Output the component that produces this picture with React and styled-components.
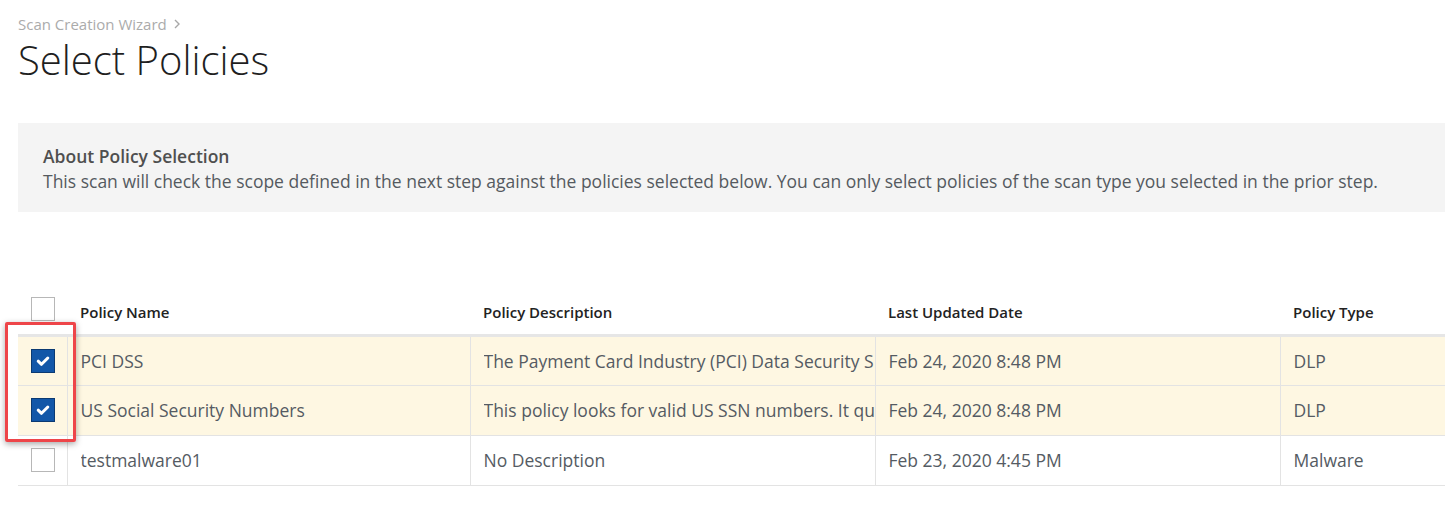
import React from 'react'
import styled, { createGlobalStyle } from 'styled-components'

const GlobalStyle = createGlobalStyle`
    html, body {
        margin: 0;
        padding: 0;
        background: #ffffff;
        font-family: "Open Sans", "Liberation Sans", Arial, sans-serif;
        overflow: hidden;
    }
`

const policies = [
    { id: 1, name: 'PCI DSS', desc: 'The Payment Card Industry (PCI) Data Security S', date: 'Feb 24, 2020 8:48 PM', type: 'DLP', selected: true },
    { id: 2, name: 'US Social Security Numbers', desc: 'This policy looks for valid US SSN numbers. It qu', date: 'Feb 24, 2020 8:48 PM', type: 'DLP', selected: true },
    { id: 3, name: 'testmalware01', desc: 'No Description', date: 'Feb 23, 2020 4:45 PM', type: 'Malware', selected: false },
]

const Check = () => (
    <svg width="16" height="16" viewBox="0 0 16 16">
        <path d="M3.2 8.2 L6.5 11.3 L12.8 5" fill="none" stroke="#fff" strokeWidth="3" strokeLinecap="round" strokeLinejoin="round" />
    </svg>
)

export default function App() {
    return (
        <Page>
            <GlobalStyle />
            <Breadcrumb>
                Scan Creation Wizard
                <Chevron viewBox="0 0 8 12"><path d="M2 2 L6 6 L2 10" /></Chevron>
            </Breadcrumb>
            <Title>Select Policies</Title>

            <InfoBox>
                <InfoTitle>About Policy Selection</InfoTitle>
                <InfoText>
                    This scan will check the scope defined in the next step against the policies selected below. You can only select policies of the scan type you selected in the prior step.
                </InfoText>
            </InfoBox>

            <TableWrap>
                <Table>
                    <colgroup>
                        <col style={{ width: 49 }} />
                        <col style={{ width: 403 }} />
                        <col style={{ width: 405 }} />
                        <col style={{ width: 405 }} />
                        <col />
                    </colgroup>
                    <thead>
                        <tr>
                            <HeadCell><Box /></HeadCell>
                            <HeadCell>Policy Name</HeadCell>
                            <HeadCell>Policy Description</HeadCell>
                            <HeadCell>Last Updated Date</HeadCell>
                            <HeadCell>Policy Type</HeadCell>
                        </tr>
                    </thead>
                    <tbody>
                        {policies.map(p => (
                            <Row key={p.id} $selected={p.selected}>
                                <Cell>
                                    <Box $checked={p.selected}>{p.selected && <Check />}</Box>
                                </Cell>
                                <Cell><Clip>{p.name}</Clip></Cell>
                                <Cell><Clip>{p.desc}</Clip></Cell>
                                <Cell><Clip>{p.date}</Clip></Cell>
                                <Cell><Clip>{p.type}</Clip></Cell>
                            </Row>
                        ))}
                    </tbody>
                </Table>
                <Highlight />
            </TableWrap>
        </Page>
    )
}

const Page = styled.div`
    padding: 14px 0 0 18px;
    width: 1440px;
`

const Breadcrumb = styled.div`
    display: flex;
    align-items: center;
    gap: 6px;
    font-size: 15px;
    line-height: 20px;
    color: #ababab;
`

const Chevron = styled.svg`
    width: 8px;
    height: 12px;
    path {
        fill: none;
        stroke: #a8a8a8;
        stroke-width: 1.4;
    }
`

const Title = styled.h1`
    margin: 0;
    font-size: 40px;
    font-weight: 300;
    line-height: 52px;
    color: #1f1f1f;
`

const InfoBox = styled.div`
    margin-top: 37px;
    background: #f4f4f4;
    padding: 21px 25px 19px;
`

const InfoTitle = styled.div`
    font-size: 17.5px;
    font-weight: 600;
    line-height: 25px;
    color: #4f4f4f;
`

const InfoText = styled.div`
    font-size: 17.5px;
    line-height: 24px;
    color: #555a60;
    white-space: nowrap;
`

const TableWrap = styled.div`
    position: relative;
    margin-top: 73px;
`

const Table = styled.table`
    width: 100%;
    border-collapse: collapse;
    table-layout: fixed;
`

const HeadCell = styled.th`
    height: 50px;
    padding: 5px 13px 0;
    text-align: left;
    font-size: 15px;
    font-weight: 600;
    color: #222;
    border-bottom: 3px solid #e6e6e6;
    box-sizing: border-box;
    vertical-align: middle;
    white-space: nowrap;
    &:first-child {
        padding: 0 0 0 13px;
    }
`

const Row = styled.tr`
    background: ${props => props.$selected ? '#fef7e2' : '#ffffff'};
    border-bottom: 1px solid #e3e3e3;
`

const Cell = styled.td`
    height: 50px;
    padding: 0 0 0 13px;
    font-size: 17.5px;
    color: #555b63;
    border-left: 1px solid #e3e3e3;
    box-sizing: border-box;
    &:first-child {
        border-left: none;
    }
`

const Clip = styled.div`
    overflow: hidden;
    white-space: nowrap;
`

const Box = styled.div`
    width: 24px;
    height: 24px;
    box-sizing: border-box;
    display: flex;
    align-items: center;
    justify-content: center;
    border: 1px solid ${props => props.$checked ? '#0b3a72' : '#b7b7b7'};
    background: ${props => props.$checked ? '#1257a8' : '#ffffff'};
`

const Highlight = styled.div`
    position: absolute;
    left: -13px;
    top: 37px;
    width: 71px;
    height: 120px;
    box-sizing: border-box;
    border: 3px solid #ee4549;
    border-radius: 2px;
    box-shadow: 0 2px 6px rgba(0, 0, 0, 0.35);
    pointer-events: none;
`
